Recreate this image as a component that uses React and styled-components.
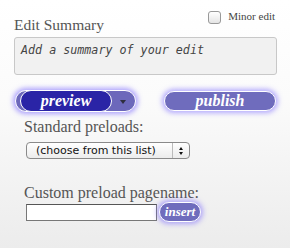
import React from "react";
import styled, { createGlobalStyle } from "styled-components";

const GlobalStyle = createGlobalStyle`
  html, body {
    margin: 0;
    padding: 0;
  }
  body {
    width: 290px;
    height: 248px;
    overflow: hidden;
    background: linear-gradient(#ffffff 0%, #fbfbfb 40%, #ececec 100%);
    font-family: "Liberation Serif", serif;
  }
`;

const Panel = styled.div`
  width: 290px;
  height: 248px;
  box-sizing: border-box;
  padding: 8px 13px 0 14px;
`;

const HeaderRow = styled.div`
  display: flex;
  justify-content: space-between;
  align-items: flex-start;
`;

const Title = styled.div`
  font-size: 15.5px;
  line-height: 18px;
  color: #555;
  margin-top: 8px;
`;

const MinorLabel = styled.label`
  display: flex;
  align-items: center;
  gap: 7px;
  font-size: 11px;
  color: #444;
  margin-right: 2px;
`;

const Check = styled.span`
  width: 11px;
  height: 11px;
  border: 1px solid #999;
  border-radius: 3px;
  background: linear-gradient(#ffffff, #e4e4e4);
  margin-top: 3px;
`;

const Summary = styled.div`
  margin-top: 3px;
  height: 38px;
  box-sizing: border-box;
  border: 1px solid #c8c8c8;
  border-radius: 3px;
  background: #f1f1f1;
  padding: 5px 6px;
  font-family: "DejaVu Sans Mono", monospace;
  font-style: italic;
  font-size: 11.7px;
  color: #444;
`;

const ButtonRow = styled.div`
  display: flex;
  align-items: center;
  margin-top: 15px;
  padding-left: 1px;
`;

const Split = styled.div`
  display: flex;
  align-items: center;
  width: 121px;
  height: 22px;
  box-sizing: border-box;
  border: 1.5px solid #fff;
  border-radius: 11px;
  background: #6c68bb;
  box-shadow: 0 0 5px 2px rgba(110, 90, 255, 0.55);
  padding-left: 4px;
`;

const Pill = styled.div`
  display: flex;
  align-items: center;
  justify-content: center;
  width: ${(p) => p.$w}px;
  height: ${(p) => p.$h}px;
  box-sizing: border-box;
  border: 1.5px solid #fff;
  border-radius: 11px;
  background: ${(p) => p.$bg};
  color: #fff;
  font-family: "Liberation Serif", serif;
  font-style: italic;
  font-weight: 600;
  font-size: ${(p) => p.$fs || 16}px;
  box-shadow: ${(p) => (p.$glow ? "0 0 5px 2px rgba(110, 90, 255, 0.5)" : "none")};
  margin-left: ${(p) => p.$ml || 0}px;
  flex-shrink: 0;
`;

const Arrow = styled.span`
  flex: 1;
  display: flex;
  justify-content: center;
  padding-right: 2px;
  &::after {
    content: "";
    border-left: 3.5px solid transparent;
    border-right: 3.5px solid transparent;
    border-top: 4px solid #2e2e3e;
    margin-top: 1px;
  }
`;

const Section = styled.div`
  padding-left: 10px;
  margin-top: ${(p) => p.$top}px;
`;

const Label = styled.div`
  font-size: 16px;
  line-height: 18px;
  color: #555;
`;

const SelectBox = styled.div`
  display: flex;
  align-items: center;
  width: 164px;
  height: 17px;
  box-sizing: border-box;
  margin: 6px 0 0 2px;
  border: 1px solid #8a8a8a;
  border-radius: 4px;
  background: linear-gradient(#ffffff, #ececec);
  font-family: "DejaVu Sans", sans-serif;
  font-size: 11px;
  color: #111;
`;

const SelectText = styled.span`
  flex: 1;
  padding-left: 9px;
`;

const Stepper = styled.span`
  width: 16px;
  height: 100%;
  border-left: 1px solid #bbb;
  display: flex;
  flex-direction: column;
  align-items: center;
  justify-content: center;
  gap: 2px;
  &::before,
  &::after {
    content: "";
    border-left: 2.5px solid transparent;
    border-right: 2.5px solid transparent;
  }
  &::before {
    border-bottom: 3px solid #111;
  }
  &::after {
    border-top: 3px solid #111;
  }
`;

const InputRow = styled.div`
  display: flex;
  align-items: center;
  gap: 2px;
  margin: 0 0 0 2px;
`;

const TextInput = styled.div`
  width: 131px;
  height: 17px;
  box-sizing: border-box;
  border: 1px solid #777;
  border-top-color: #555;
  background: #fff;
`;

export default function App() {
  return (
    <>
      <GlobalStyle />
      <Panel>
        <HeaderRow>
          <Title>Edit Summary</Title>
          <MinorLabel>
            <Check />
            Minor edit
          </MinorLabel>
        </HeaderRow>
        <Summary>Add a summary of your edit</Summary>
        <ButtonRow>
          <Split>
            <Pill $w={92} $h={22} $bg="#2a24a6">
              preview
            </Pill>
            <Arrow />
          </Split>
          <Pill $w={112} $h={20} $bg="#6f6cbd" $glow $ml={28}>
            publish
          </Pill>
        </ButtonRow>
        <Section $top={6}>
          <Label>Standard preloads:</Label>
          <SelectBox>
            <SelectText>(choose from this list)</SelectText>
            <Stepper />
          </SelectBox>
        </Section>
        <Section $top={25}>
          <Label>Custom preload pagename:</Label>
          <InputRow>
            <TextInput />
            <Pill $w={42} $h={20} $bg="#6f6cbd" $fs={13} $glow>
              insert
            </Pill>
          </InputRow>
        </Section>
      </Panel>
    </>
  );
}
